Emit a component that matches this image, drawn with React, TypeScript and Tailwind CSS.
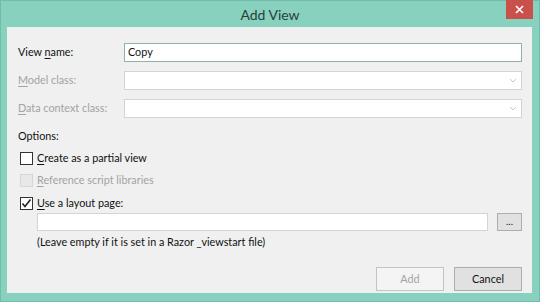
import React from 'react'

const font = { fontFamily: 'Lato, "Noto Sans", Arial, sans-serif' }

function Mn({ children }: { children: React.ReactNode }) {
  return <span className="underline underline-offset-2">{children}</span>
}

function Chevron() {
  return (
    <svg width="8" height="5" viewBox="0 0 8 5" className="mr-[4px]">
      <path d="M1 1 L4 4 L7 1" fill="none" stroke="#c8c8c8" strokeWidth="1" />
    </svg>
  )
}

function CheckBox({ checked = false, disabled = false }: { checked?: boolean; disabled?: boolean }) {
  return (
    <div
      className={`w-[13px] h-[13px] border flex items-center justify-center ${
        disabled ? 'border-[#d6d6d6] bg-[#e8e8e8]' : 'border-[#333333] bg-white'
      }`}
    >
      {checked && (
        <svg width="11" height="11" viewBox="0 0 11 11">
          <path d="M1.5 5.5 L4 8.5 L9.5 1.5" fill="none" stroke="#222" strokeWidth="1.6" />
        </svg>
      )}
    </div>
  )
}

export default function App() {
  return (
    <div
      className="w-[540px] h-[302px] bg-[#88d1bf] border border-[#6fbdaa] flex flex-col text-[10.8px] text-[#111]"
      style={font}
    >
      {/* title bar */}
      <div className="h-[26px] relative flex items-center justify-center">
        <span className="text-[14px] text-[#27403b] mt-[1px]">Add View</span>
        <div className="absolute right-[6px] top-[-1px] w-[27px] h-[19px] bg-[#c9504b] flex items-center justify-center">
          <svg width="9" height="9" viewBox="0 0 9 9">
            <path d="M1 1 L8 8 M8 1 L1 8" stroke="white" strokeWidth="1.6" />
          </svg>
        </div>
      </div>

      {/* client */}
      <div className="ml-[6px] mr-[7px] h-[266px] bg-[#f0f0f0] border-l border-t border-[#e8f4f1] flex flex-col pl-[10px] pr-[10px] pt-[15px]">
        <div className="flex items-center h-[19px]">
          <span className="w-[106px]">View <Mn>n</Mn>ame:</span>
          <div className="flex-1 h-[19px] bg-white border border-[#8fb3aa] flex items-center px-[3px]">Copy</div>
        </div>
        <div className="flex items-center h-[19px] mt-[9px] text-[#a3a3a3]">
          <span className="w-[106px]"><Mn>M</Mn>odel class:</span>
          <div className="flex-1 h-[19px] bg-white border border-[#d4d4d4] flex items-center justify-end">
            <Chevron />
          </div>
        </div>
        <div className="flex items-center h-[19px] mt-[9px] text-[#a3a3a3]">
          <span className="w-[106px]"><Mn>D</Mn>ata context class:</span>
          <div className="flex-1 h-[19px] bg-white border border-[#d4d4d4] flex items-center justify-end">
            <Chevron />
          </div>
        </div>

        <div className="mt-[9px] h-[18px] flex items-center">Options:</div>

        <div className="ml-[2px] mt-[4px] flex items-center gap-[4px] h-[18px]">
          <CheckBox />
          <span><Mn>C</Mn>reate as a partial view</span>
        </div>
        <div className="ml-[2px] mt-[4px] flex items-center gap-[4px] h-[18px] text-[#a3a3a3]">
          <CheckBox disabled />
          <span><Mn>R</Mn>eference script libraries</span>
        </div>
        <div className="ml-[2px] mt-[5px] flex items-center gap-[4px] h-[18px]">
          <CheckBox checked />
          <span><Mn>U</Mn>se a layout page:</span>
        </div>

        <div className="ml-[19px] mt-[1px] flex items-center gap-[9px]">
          <div className="flex-1 h-[18px] bg-white border border-[#d4d4d4]" />
          <div className="w-[25px] h-[18px] bg-[#e1e1e1] border border-[#adadad] flex items-center justify-center text-[10px] leading-none pb-[3px]">
            ...
          </div>
        </div>
        <div className="ml-[19px] mt-[2px] h-[18px] flex items-center">
          (Leave empty if it is set in a Razor _viewstart file)
        </div>

        <div className="mt-[16px] flex justify-end gap-[10px]">
          <div className="w-[68px] h-[24px] bg-[#f4f4f4] border border-[#c4c4c4] flex items-center justify-center text-[#a3a3a3]">
            Add
          </div>
          <div className="w-[68px] h-[24px] bg-[#e1e1e1] border border-[#adadad] flex items-center justify-center">
            Cancel
          </div>
        </div>
      </div>
    </div>
  )
}
